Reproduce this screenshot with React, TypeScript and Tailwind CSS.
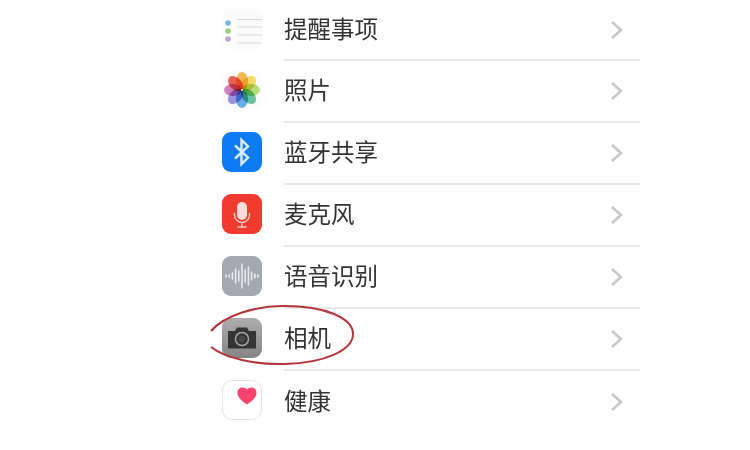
const fontFamily = "font-['Noto_Sans_CJK_SC','Noto_Sans',sans-serif]";

function Reminders() {
  return (
    <div className="flex h-10 w-10 items-center justify-center rounded-[9px] bg-[#fbfbfc]">
      <svg width="40" height="40" viewBox="0 0 40 40" className="overflow-visible blur-[0.5px]">
        <circle cx="6" cy="14" r="2.800" fill="#7fb2e5" />
        <circle cx="6" cy="22" r="2.800" fill="#9bd07f" />
        <circle cx="6" cy="30" r="2.800" fill="#c3a3d8" />
        <path d="M15 10.500h25M15 18h25M15 26h25M15 34h25" stroke="#d9d9dc" strokeWidth="1" />
      </svg>
    </div>
  );
}

function Photos() {
  const petals = ["#f6a83a", "#f5d64c", "#a9d45e", "#4fb98c", "#4d9fe4", "#8a7cd6", "#c46bb4", "#e8453c"];
  return (
    <div className="flex h-10 w-10 items-center justify-center rounded-[9px] bg-[#fcfcfc]">
      <svg width="36" height="36" viewBox="0 0 36 36" className="blur-[0.5px]">
        {petals.map((color, i) => (
          <ellipse
            key={color}
            cx="18"
            cy="9"
            rx="6"
            ry="9"
            fill={color}
            fillOpacity="0.85"
            className="mix-blend-multiply"
            transform={`rotate(${i * 45} 18 18)`}
          />
        ))}
        <circle cx="18" cy="18" r="1" fill="#f6f0d8" />
      </svg>
    </div>
  );
}

function Bluetooth() {
  return (
    <div className="flex h-10 w-10 items-center justify-center rounded-[9px] bg-[#0f7bf2]">
      <svg width="20" height="30" viewBox="0 0 20 30" fill="none" stroke="#dcebfd" strokeWidth="2.400" className="blur-[0.4px]">
        <path d="M3 8.500 16 20.500 9.500 27V3L16 9.500 3 21.500" />
      </svg>
    </div>
  );
}

function Microphone() {
  return (
    <div className="flex h-10 w-10 items-center justify-center rounded-[9px] bg-[#f23b30]">
      <svg width="20" height="30" viewBox="0 0 20 30" fill="none" className="blur-[0.4px]">
        <rect x="5" y="3" width="10" height="18" rx="5" fill="#f8dcd8" />
        <path d="M2.500 14v2a7.500 7.500 0 0 0 15 0v-2M10 23.500V28M5.500 28h9" stroke="#f6cfca" strokeWidth="1.400" />
      </svg>
    </div>
  );
}

function Speech() {
  const bars = [1, 1, 3, 7, 5, 12, 6, 9, 4, 2, 1];
  return (
    <div className="flex h-10 w-10 items-center justify-center rounded-[9px] bg-[#a3a8b1]">
      <svg width="36" height="30" viewBox="0 0 36 30" className="blur-[0.4px]">
        {bars.map((h, i) => (
          <line key={i} x1={2 + i * 3.200} x2={2 + i * 3.200} y1={15 - h} y2={15 + h} stroke="#eceef1" strokeWidth="1.500" strokeLinecap="round" />
        ))}
      </svg>
    </div>
  );
}

function Camera() {
  return (
    <div className="flex h-10 w-10 items-center justify-center rounded-[9px] bg-gradient-to-b from-[#adadad] to-[#858585]">
      <svg width="30" height="24" viewBox="0 0 30 24" className="blur-[0.4px]">
        <path d="M1 5h7l2-3.500h10L22 5h7v17.500H1z" fill="#343435" />
        <circle cx="15" cy="13" r="6.500" fill="#343435" stroke="#a5a5a5" strokeWidth="1.500" />
        <circle cx="15" cy="13" r="3.200" fill="#4a4a4b" />
      </svg>
    </div>
  );
}

function Health() {
  return (
    <div className="flex h-10 w-10 items-start rounded-[10px] border border-[#e3e3e3] bg-white pl-[14px] pt-1.5">
      <svg width="20" height="18" viewBox="0 0 20 18" className="blur-[0.5px]">
        <path d="M10 17.500C4 13.500 .5 10 .5 5.500.5 2.500 2.800.5 5.500.5 7.500.5 9 1.300 10 2.500c1-1.200 2.500-2 4.500-2 2.700 0 5 2 5 5 0 4.500-3.500 8-9.500 12z" fill="#f8436f" />
      </svg>
    </div>
  );
}

const rows = [
  { label: "提醒事项", icon: <Reminders />, height: "h-[61px]" },
  { label: "照片", icon: <Photos />, height: "h-[62px]" },
  { label: "蓝牙共享", icon: <Bluetooth />, height: "h-[62px]" },
  { label: "麦克风", icon: <Microphone />, height: "h-[62px]" },
  { label: "语音识别", icon: <Speech />, height: "h-[62px]" },
  { label: "相机", icon: <Camera />, height: "h-[62px]" },
  { label: "健康", icon: <Health />, height: "h-[62px]" },
];

export default function App() {
  return (
    <div className={`relative h-[450px] w-[750px] overflow-hidden bg-white ${fontFamily}`}>
      <div className="ml-[222px] w-[418px]">
        {rows.map((row, i) => (
          <div key={row.label} className={`flex items-center ${row.height}`}>
            <div className="mb-1 w-10 shrink-0">{row.icon}</div>
            <div className={`ml-[22px] flex h-full flex-1 items-center pb-0.5 pr-4 ${i < rows.length - 1 ? "border-b-2 border-[#e8e8e8]" : ""}`}>
              <span className="flex-1 text-[23.5px] leading-none text-[#333333] blur-[0.4px]">{row.label}</span>
              <svg width="14" height="20" viewBox="0 0 14 20" fill="none" stroke="#c8c8ca" strokeWidth="2.500" className="mt-0.5 blur-[0.5px]">
                <path d="M2 2l9 8-9 8" />
              </svg>
            </div>
          </div>
        ))}
      </div>
      <svg width="160" height="70" viewBox="0 0 160 70" fill="none" className="absolute left-[205px] top-[300px] blur-[0.3px]">
        <path d="M6 31C20 15 50 6 80 6c40 0 68 12 68 28s-28 29-68 30c-30 1-60-6-74-17" stroke="#b5343a" strokeWidth="2" />
      </svg>
    </div>
  );
}
